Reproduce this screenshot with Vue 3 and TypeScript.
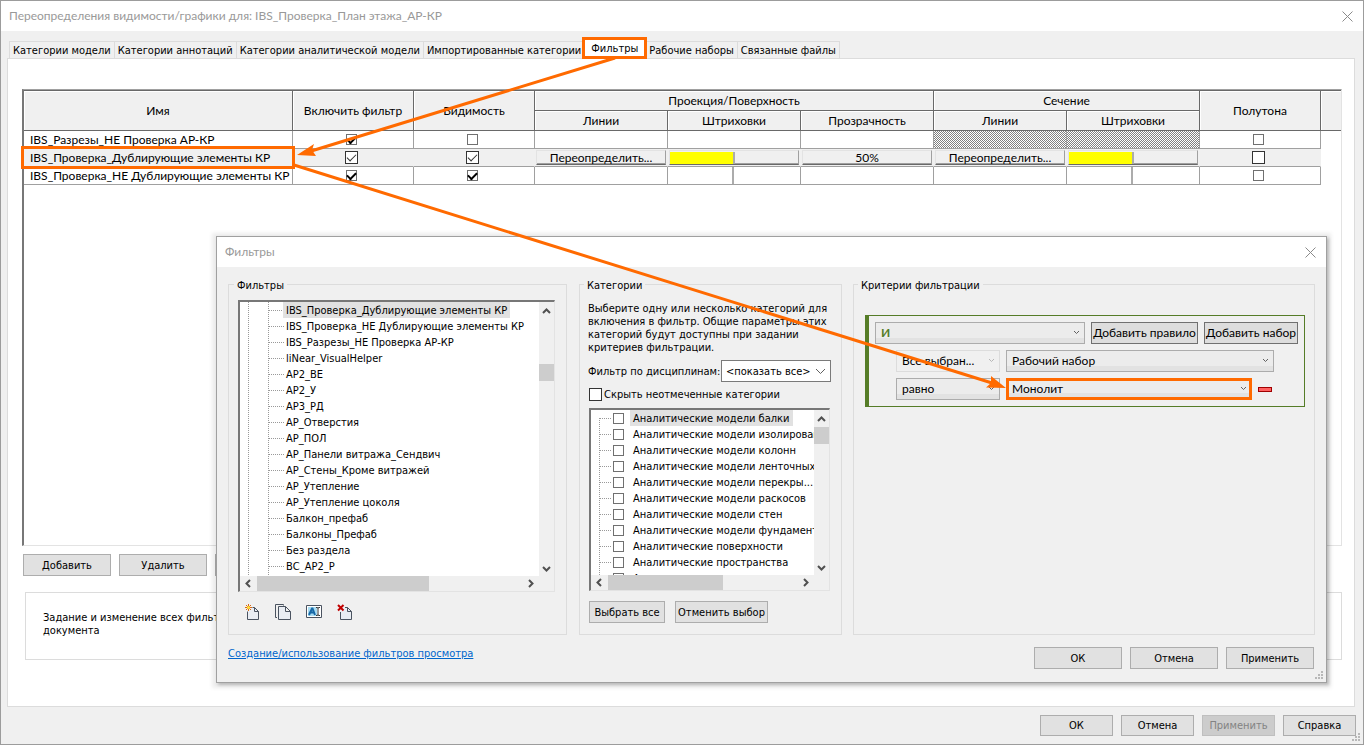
<script setup lang="ts">
interface FilterRow {
  name: string
  enabled: boolean
  visible: boolean
  halftone: boolean
  selected?: boolean
  cutLocked?: boolean
}

const tabsBefore = ['Категории модели', 'Категории аннотаций', 'Категории аналитической модели', 'Импортированные категории']
const tabsAfter = ['Рабочие наборы', 'Связанные файлы']

const rows: FilterRow[] = [
  { name: 'IBS_Разрезы_НЕ Проверка АР-КР', enabled: true, visible: false, halftone: false, cutLocked: true },
  { name: 'IBS_Проверка_Дублирующие элементы КР', enabled: true, visible: true, halftone: false, selected: true },
  { name: 'IBS_Проверка_НЕ Дублирующие элементы КР', enabled: true, visible: true, halftone: false },
]

const filters = [
  'IBS_Проверка_Дублирующие элементы КР',
  'IBS_Проверка_НЕ Дублирующие элементы КР',
  'IBS_Разрезы_НЕ Проверка АР-КР',
  'liNear_VisualHelper',
  'АР2_ВЕ',
  'АР2_У',
  'АР3_РД',
  'АР_Отверстия',
  'АР_ПОЛ',
  'АР_Панели витража_Сендвич',
  'АР_Стены_Кроме витражей',
  'АР_Утепление',
  'АР_Утепление цоколя',
  'Балкон_префаб',
  'Балконы_Префаб',
  'Без раздела',
  'ВС_АР2_Р',
]

const categories = [
  'Аналитические модели балки',
  'Аналитические модели изолированн',
  'Аналитические модели колонн',
  'Аналитические модели ленточных ф',
  'Аналитические модели перекры...',
  'Аналитические модели раскосов',
  'Аналитические модели стен',
  'Аналитические модели фундаментн',
  'Аналитические поверхности',
  'Аналитические пространства',
  'А',
]
</script>

<template>
  <main class="window">
    <header class="titlebar">
      <h1>Переопределения видимости/графики для: IBS_Проверка_План этажа_АР-КР</h1>
      <button class="close" aria-label="Закрыть">
        <svg width="11" height="11" viewBox="0 0 11 11"><path d="M.5.5l10 10M10.5.5l-10 10" /></svg>
      </button>
    </header>

    <nav class="tabs">
      <button v-for="t in tabsBefore" :key="t" class="tab">{{ t }}</button>
      <button class="tab active">Фильтры</button>
      <button v-for="t in tabsAfter" :key="t" class="tab">{{ t }}</button>
    </nav>

    <section class="page">
      <div class="grid-box">
        <table>
          <colgroup>
            <col class="c-name" /><col class="c-check" /><col class="c-check" />
            <col class="c-edit" /><col class="c-edit" /><col class="c-edit" /><col class="c-edit" /><col class="c-edit" />
            <col class="c-check" /><col />
          </colgroup>
          <thead>
            <tr>
              <th rowspan="2">Имя</th>
              <th rowspan="2">Включить фильтр</th>
              <th rowspan="2">Видимость</th>
              <th colspan="3">Проекция/Поверхность</th>
              <th colspan="2">Сечение</th>
              <th rowspan="2">Полутона</th>
              <th rowspan="2" class="rest"></th>
            </tr>
            <tr>
              <th>Линии</th><th>Штриховки</th><th>Прозрачность</th><th>Линии</th><th>Штриховки</th>
            </tr>
          </thead>
          <tbody>
            <tr v-for="r in rows" :key="r.name" :class="{ selected: r.selected }">
              <td class="name"><div :class="{ marked: r.selected }">{{ r.name }}</div></td>
              <td class="tick"><input type="checkbox" class="check" :checked="r.enabled" aria-label="Включить фильтр" /></td>
              <td class="tick"><input type="checkbox" class="check" :checked="r.visible" aria-label="Видимость" /></td>
              <td><button v-if="r.selected" class="cell-btn">Переопределить...</button></td>
              <td>
                <button v-if="r.selected" class="cell-btn swatch" aria-label="Штриховки проекции"><i></i></button>
                <div v-else-if="!r.cutLocked" class="divider"></div>
              </td>
              <td><button v-if="r.selected" class="cell-btn">50%</button></td>
              <td :class="{ locked: r.cutLocked }"><button v-if="r.selected" class="cell-btn">Переопределить...</button></td>
              <td :class="{ locked: r.cutLocked }">
                <button v-if="r.selected" class="cell-btn swatch" aria-label="Штриховки сечения"><i></i></button>
                <div v-else-if="!r.cutLocked" class="divider"></div>
              </td>
              <td class="tick"><input type="checkbox" class="check" :checked="r.halftone" aria-label="Полутона" /></td>
              <td class="rest"></td>
            </tr>
          </tbody>
        </table>
      </div>
      <div class="row-actions">
        <button class="btn">Добавить</button>
        <button class="btn">Удалить</button>
        <button class="btn">Вверх</button>
      </div>
      <div class="note">
        <p>Задание и изменение всех фильтров<br />документа</p>
      </div>
    </section>

    <footer class="window-actions">
      <button class="btn">ОК</button>
      <button class="btn">Отмена</button>
      <button class="btn" disabled>Применить</button>
      <button class="btn">Справка</button>
    </footer>
    <svg class="grip" width="9" height="9" viewBox="0 0 9 9"><path d="M6 0h2v2h-2zM3 3h2v2h-2zM6 3h2v2h-2zM0 6h2v2h-2zM3 6h2v2h-2zM6 6h2v2h-2z" /></svg>

    <section class="dialog" role="dialog" aria-label="Фильтры">
      <header class="titlebar">
        <h2>Фильтры</h2>
        <button class="close" aria-label="Закрыть">
          <svg width="11" height="11" viewBox="0 0 11 11"><path d="M.5.5l10 10M10.5.5l-10 10" /></svg>
        </button>
      </header>

      <div class="groups">
        <fieldset class="group filters">
          <legend>Фильтры</legend>
          <div class="listbox tall">
            <ul class="items tree">
              <li v-for="(f, i) in filters" :key="f" :class="{ current: i === 0 }"><span>{{ f }}</span></li>
            </ul>
            <div class="vbar">
              <svg width="9" height="6" viewBox="0 0 9 6"><path d="M1 5l3.500-3.500L8 5" /></svg>
              <div class="vthumb"></div>
              <svg width="9" height="6" viewBox="0 0 9 6"><path d="M1 1l3.500 3.500L8 1" /></svg>
            </div>
            <div class="hbar">
              <svg width="6" height="9" viewBox="0 0 6 9"><path d="M5 1L1.500 4.500L5 8" /></svg>
              <div class="hthumb"></div>
              <svg width="6" height="9" viewBox="0 0 6 9"><path d="M1 1l3.500 3.500L1 8" /></svg>
            </div>
          </div>
          <div class="tools">
            <button aria-label="Создать">
              <svg width="16" height="17" viewBox="0 0 16 17">
                <path class="paper" d="M3.500 7.500v8h11v-8l-4-4H8.500M10.500 3.500v4h4" />
                <path class="sun" d="M4.500 0v7M1 3.500h7M2 1l5 5M7 1L2 6" /><circle class="sun-core" cx="4.500" cy="3.500" r="1.500" />
              </svg>
            </button>
            <button aria-label="Копировать">
              <svg width="16" height="17" viewBox="0 0 16 17">
                <path class="back" d="M2 13.500H.5V.5h8v1" />
                <path class="paper" d="M3.500 2.500h7l5 5v8h-12zM10.500 2.500v5h5" />
              </svg>
            </button>
            <button aria-label="Переименовать">
              <svg width="16" height="17" viewBox="0 0 16 17">
                <path class="card" d="M.5 1.500h15v12H.5z" /><path class="field" d="M2 3h9v9H2z" />
                <path class="glyph" d="M3 11L6 4.500h.5L9 11M4.500 8.500h4" /><path class="caret" d="M10 3.500h1l1 .5 1-.5h1M12 4v7M10 11.500h1l1-.5 1 .5h1" />
              </svg>
            </button>
            <button aria-label="Удалить">
              <svg width="16" height="17" viewBox="0 0 16 17">
                <path class="paper" d="M3.500 8v7.500h11v-8l-4-4H8M10.500 3.500v4h4" />
                <path class="cross" d="M1 1l5.500 5.500M6.500 1L1 6.500" />
              </svg>
            </button>
          </div>
        </fieldset>

        <fieldset class="group categories">
          <legend>Категории</legend>
          <p>Выберите одну или несколько категорий для включения в фильтр. Общие параметры этих категорий будут доступны при задании критериев фильтрации.</p>
          <div class="discipline">
            <label for="discipline">Фильтр по дисциплинам:</label>
            <span class="combo plain">
              <select id="discipline"><option>&lt;показать все&gt;</option></select>
              <svg width="11" height="7" viewBox="0 0 11 7"><path d="M1 1l4.500 4.500L10 1" /></svg>
            </span>
          </div>
          <label class="hide"><input type="checkbox" class="check big" />Скрыть неотмеченные категории</label>
          <div class="listbox short">
            <ul class="items checks">
              <li v-for="(c, i) in categories" :key="c" :class="{ current: i === 0 }">
                <label><input type="checkbox" class="check" /><span>{{ c }}</span></label>
              </li>
            </ul>
            <div class="vbar">
              <svg width="9" height="6" viewBox="0 0 9 6"><path d="M1 5l3.500-3.500L8 5" /></svg>
              <div class="vthumb"></div>
              <svg width="9" height="6" viewBox="0 0 9 6"><path d="M1 1l3.500 3.500L8 1" /></svg>
            </div>
            <div class="hbar">
              <svg width="6" height="9" viewBox="0 0 6 9"><path d="M5 1L1.500 4.500L5 8" /></svg>
              <div class="hthumb"></div>
              <svg width="6" height="9" viewBox="0 0 6 9"><path d="M1 1l3.500 3.500L1 8" /></svg>
            </div>
          </div>
          <div class="pick">
            <button class="btn">Выбрать все</button>
            <button class="btn">Отменить выбор</button>
          </div>
        </fieldset>

        <fieldset class="group criteria">
          <legend>Критерии фильтрации</legend>
          <div class="rules">
            <div class="rule head">
              <span class="combo and">
                <select aria-label="Условие"><option>И</option></select>
                <svg width="7" height="5" viewBox="0 0 7 5"><path d="M1 1l2.500 2.500L6 1" /></svg>
              </span>
              <button class="rule-btn">Добавить правило</button>
              <button class="rule-btn">Добавить набор</button>
            </div>
            <div class="rule">
              <span class="combo side off">
                <select aria-label="Категории"><option>Все выбран...</option></select>
                <svg width="7" height="5" viewBox="0 0 7 5"><path d="M1 1l2.500 2.500L6 1" /></svg>
              </span>
              <span class="combo wide">
                <select aria-label="Параметр"><option>Рабочий набор</option></select>
                <svg width="7" height="5" viewBox="0 0 7 5"><path d="M1 1l2.500 2.500L6 1" /></svg>
              </span>
            </div>
            <div class="rule">
              <span class="combo side">
                <select aria-label="Оператор"><option>равно</option></select>
                <svg width="7" height="5" viewBox="0 0 7 5"><path d="M1 1l2.500 2.500L6 1" /></svg>
              </span>
              <span class="combo wide value">
                <select aria-label="Значение"><option>Монолит</option></select>
                <svg width="7" height="5" viewBox="0 0 7 5"><path d="M1 1l2.500 2.500L6 1" /></svg>
              </span>
              <button class="remove" aria-label="Удалить правило"></button>
            </div>
          </div>
        </fieldset>
      </div>

      <footer class="dialog-actions">
        <a href="#">Создание/использование фильтров просмотра</a>
        <button class="btn">ОК</button>
        <button class="btn">Отмена</button>
        <button class="btn">Применить</button>
      </footer>
      <svg class="grip" width="9" height="9" viewBox="0 0 9 9"><path d="M6 0h2v2h-2zM3 3h2v2h-2zM6 3h2v2h-2zM0 6h2v2h-2zM3 6h2v2h-2zM6 6h2v2h-2z" /></svg>
    </section>

    <svg class="arrows" width="1364" height="745" viewBox="0 0 1364 745" aria-hidden="true">
      <path class="shaft" d="M615 58L308 152M294 165L992 383" />
      <path class="head" d="M297 155l17-11-2 6 4 6zM1006 388l-20-.5 5-4.500 0-7z" />
    </svg>
  </main>
</template>

<style>
html, body, #app { height: 100%; }
body { margin: 0; }
</style>

<style scoped>
* { box-sizing: border-box; }
.window {
  position: relative; display: flex; flex-direction: column; min-height: 100%; overflow: hidden;
  border: 1px solid #9c9c9c; background: #f0f0f0; color: #000;
  font: 11px/13px "DejaVu Sans Condensed", Tahoma, sans-serif;
}
button, select, input { margin: 0; font: inherit; color: inherit; }
h1, h2, p, ul { margin: 0; padding: 0; font-weight: 400; }
.titlebar {
  display: flex; align-items: center; justify-content: space-between; height: 30px; padding: 0 10px 0 8px;
  background: #fff; color: #999; font: 12px/16px Lato, sans-serif;
}
.titlebar h1, .titlebar h2 { font-size: 12px; }
.close { display: flex; padding: 0; border: 0; background: none; }
.close path { fill: none; stroke: #8a8a8a; }

.tabs { display: flex; align-items: flex-end; height: 27px; padding-left: 8px; }
.tab { height: 17px; padding: 0 3px; border: 1px solid #dcdcdc; border-width: 1px 1px 0 0; background: #f0f0f0; white-space: nowrap; }
.tab:first-child { border-left-width: 1px; }
.tab.active { position: relative; width: 65px; height: 22px; margin: 0 -1px -1px -3px; padding: 0; border: 3px solid #ff6a00; background: #fff; }
.page {
  flex: 1; margin: 0 8px 0 6px; padding: 30px 12px 0 14px; border: 1px solid #dcdcdc; background: #fff;
}
.grid-box { height: 457px; border: 1px solid #e3e3e3; border-top-color: #a0a0a0; border-left: 2px solid #777; }
table { width: 100%; table-layout: fixed; border-spacing: 0; font: 12px/16px Lato, sans-serif; border-top: 1px solid #696969; }
.c-name { width: 269px; }
.c-check { width: 121px; }
.c-edit { width: 133px; }
th {
  height: 20px; padding: 0; border: 1px solid #696969; border-width: 0 1px 1px 0; background: #f0f0f0;
  box-shadow: inset 1px 1px #fff; font-weight: 400; text-align: center;
}
th.rest { border-right: 0; }
td { height: 18px; padding: 0; border: 1px solid #a0a0a0; border-width: 0 1px 1px 0; text-align: center; line-height: 17px; }
td.tick { padding-right: 4px; }
td.rest { border: 0; background: #fff; }
td.name { text-align: left; }
td.name div { height: 17px; padding-left: 6px; white-space: nowrap; }
td.name .marked { box-shadow: 0 0 0 3px #ff6a00; position: relative; }
.selected td { background: #f0f0f0; border-right-color: #f0f0f0; }
.selected td.rest { background: #fff; }
.locked { background: repeating-conic-gradient(#808080 0 25%, #fff 0 50%) 0 0 / 2px 2px; }
.check {
  display: grid; place-items: center; appearance: none; flex: none; width: 11px; height: 11px; margin: 0 auto;
  border: 1px solid #707070; border-radius: 0; background: #fff;
}
.check:checked::before { content: ""; width: 7px; height: 4px; border: solid #000; border-width: 0 0 2px 2px; transform: translateY(-1px) rotate(-45deg); }
.selected .check, .check.big { width: 13px; height: 13px; border-color: #333; }
.selected .check:checked::before { width: 8px; height: 4px; border: solid #333; border-width: 0 0 1px 1px; }
.cell-btn {
  display: block; width: 130px; height: 15px; margin: 0 auto; padding: 0; border: 1px solid; border-color: #e3e3e3 #a0a0a0 #696969 #e3e3e3;
  background: #f0f0f0; line-height: 13px; box-shadow: inset 0 -1px #a0a0a0;
}
.swatch i { display: block; width: 65px; height: 12px; border-right: 2px solid #acacac; background: #ff0; }
.divider { width: 66px; height: 17px; border-right: 2px solid #acacac; }

.btn { height: 22px; padding: 0; border: 1px solid #adadad; background: #e1e1e1; white-space: nowrap; }
.btn:disabled { border-color: #bfbfbf; background: #ccc; color: #838383; }
.row-actions { display: flex; gap: 8px; margin: 8px 0 0 1px; }
.row-actions .btn { width: 88px; }
.note { height: 68px; margin: 16px 0 0 3px; padding: 18px 17px 0; border: 1px solid #dcdcdc; }
.window-actions { display: flex; justify-content: flex-end; gap: 8px; padding: 8px 7px 8px; }
.window-actions .btn { width: 73px; height: 21px; }
.grip { position: absolute; right: 2px; bottom: 2px; fill: #b8b8b8; }

.dialog {
  position: absolute; top: 235px; left: 215px; right: 36px; display: flex; flex-direction: column; height: 447px;
  border: 1px solid #a0a0a0; background: #f0f0f0; box-shadow: 2px 2px 3px rgba(0, 0, 0, .22), 0 1px 4px 4px rgba(0, 0, 0, .08);
}
.groups { flex: 1; display: grid; grid-template-columns: 339px 263px 1fr; gap: 11px; padding: 11px 11px 0; }
.group { min-width: 0; height: 357px; margin: 0; padding: 0 9px; border: 1px solid #dcdcdc; }
.group.categories { margin-left: 1px; margin-right: -1px; padding: 0 10px 0 8px; }
legend { height: 13px; margin-left: -4px; padding: 1px 3px 0; }
.criteria legend { margin-left: -5px; }
.listbox {
  display: grid; grid-template: minmax(0, 1fr) 15px / minmax(0, 1fr) 15px; width: 317px; border: 1px solid #e3e3e3;
  border-top: 2px solid #777; border-left: 2px solid #777; background: #fff;
}
.listbox.tall { height: 292px; margin-top: 9px; }
.listbox.short { width: 241px; height: 183px; margin: 7px 0 0 1px; }
.items { overflow: hidden; list-style: none; }
.items li { height: 16px; line-height: 17px; white-space: nowrap; }
.items li span { display: inline-block; height: 16px; padding: 0 3px; }
.items .current span { background: #e1e1e1; }
.tree { background: repeating-linear-gradient(#999 0 1px, transparent 0 2px) 8px 0 / 1px 100% no-repeat, repeating-linear-gradient(#999 0 1px, transparent 0 2px) 28px 0 / 1px 100% no-repeat; }
.tree li { padding-left: 43px; background: repeating-linear-gradient(90deg, #999 0 1px, transparent 0 2px) 29px 8px / 15px 1px no-repeat; }
.checks { background: repeating-linear-gradient(#999 0 1px, transparent 0 2px) 8px 8px / 1px 100% no-repeat; }
.checks li { background: repeating-linear-gradient(90deg, #999 0 1px, transparent 0 2px) 9px 8px / 11px 1px no-repeat; }
.checks label { display: flex; align-items: center; gap: 6px; height: 16px; padding-left: 22px; }
.checks .check { margin: 0; }
.vbar { display: flex; flex-direction: column; align-items: center; padding: 6px 0 4px; background: #f0f0f0; }
.hbar { grid-column: 1 / 3; display: flex; align-items: center; padding: 0 20px 0 5px; background: #f0f0f0; }
.vbar path, .hbar path { fill: none; stroke: #505050; stroke-width: 2; }
.vthumb { width: 15px; height: 17px; background: #cdcdcd; }
.tall .vthumb { margin: 50px 0 auto; }
.short .vthumb { margin: 5px 0 auto; }
.hthumb { height: 15px; margin: 0 auto 0 6px; background: #cdcdcd; }
.tall .hthumb { width: 172px; }
.short .hthumb { width: 115px; }
.tools { display: flex; gap: 15px; padding: 12px 6px; }
.tools button { display: flex; padding: 0; border: 0; background: none; }
.paper { fill: #e9edf3; stroke: #4a5360; }
.back { fill: none; stroke: #4a5360; }
.sun { fill: none; stroke: #dc6a10; }
.sun-core { fill: #ffe63b; }
.card { fill: #fff; stroke: #4a5360; }
.field { fill: #a9dcf2; }
.glyph { fill: none; stroke: #1768a6; stroke-width: 2; }
.caret { fill: none; stroke: #333; }
.cross { fill: none; stroke: #c00000; stroke-width: 2; }

.categories p { margin: 11px -8px 0 0; }
.discipline { display: flex; align-items: center; justify-content: space-between; margin-top: 6px; white-space: nowrap; }
.combo { position: relative; display: block; height: 22px; }
.combo select {
  display: block; appearance: none; width: 100%; height: 100%; padding: 0 20px 0 5px; border: 1px solid #acacac; border-radius: 0;
  background: linear-gradient(#ececec 75%, #e2e2e2 0);
}
.combo svg { position: absolute; right: 5px; top: 8px; fill: none; stroke: #606060; pointer-events: none; }
.combo.plain { width: 110px; }
.combo.plain select { padding: 0 16px 0 4px; border-color: #7a7a7a; background: #fff; }
.hide { display: flex; align-items: center; gap: 2px; margin: 6px 0 0 1px; }
.hide .check { margin: 0; }
.pick { display: flex; gap: 10px; margin: 10px 0 0 1px; }
.pick .btn:first-child { width: 76px; }
.pick .btn:last-child { width: 93px; }

.group.criteria { margin-left: 1px; padding-right: 9px; }
.rules {
  display: grid; align-content: start; gap: 6px; height: 92px; margin: 24px 0 0 2px; padding: 6px 6px 0;
  border: 1px solid #557c27; border-left-width: 4px; font: 12px/16px Lato, sans-serif;
}
.rule { display: flex; gap: 6px; padding-left: 21px; }
.rule.head { gap: 6px; padding-left: 0; }
.and { flex: 1; }
.combo.and select { color: #557c27; font-weight: 700; }
.side { width: 104px; }
.wide { flex: none; width: 268px; }
.off select { border-color: #dcdcdc; background: #f0f0f0; }
.off svg { opacity: .4; }
.value { width: 246px; }
.value select { padding-left: 3px; border: 3px solid #ff6a00; }
.rule-btn { width: 107px; height: 22px; padding: 0; border: 1px solid #707070; background: #ddd; white-space: nowrap; }
.rule-btn:last-child { width: 94px; }
.remove { align-self: center; width: 14px; height: 5px; padding: 0; border: 1px solid #a00000; background: #ff6060; }
.dialog-actions { display: flex; align-items: flex-start; gap: 8px; padding: 0 12px 13px 11px; }
.dialog-actions a { margin-right: auto; color: #0066cc; }
.dialog-actions .btn { width: 88px; }
.arrows { position: absolute; left: -1px; top: -1px; pointer-events: none; }
.shaft { fill: none; stroke: #ff6a00; stroke-width: 3; }
.arrows .head { fill: #ff6a00; }
</style>
